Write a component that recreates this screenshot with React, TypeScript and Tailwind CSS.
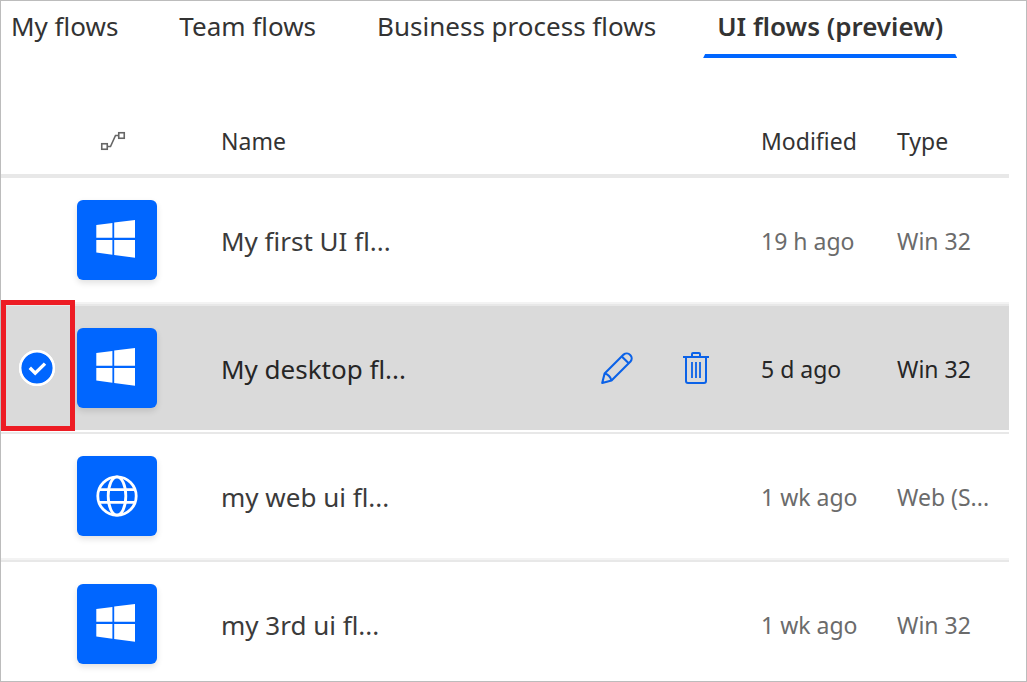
import { useState } from "react";
import { clsx } from "clsx";

type Kind = "windows" | "web";

interface Flow {
  id: number;
  name: string;
  modified: string;
  type: string;
  kind: Kind;
}

const tabs = ["My flows", "Team flows", "Business process flows", "UI flows (preview)"];

const flows: Flow[] = [
  { id: 1, name: "My first UI fl...", modified: "19 h ago", type: "Win 32", kind: "windows" },
  { id: 2, name: "My desktop fl...", modified: "5 d ago", type: "Win 32", kind: "windows" },
  { id: 3, name: "my web ui fl...", modified: "1 wk ago", type: "Web (S...", kind: "web" },
  { id: 4, name: "my 3rd ui fl...", modified: "1 wk ago", type: "Win 32", kind: "windows" },
];

function FlowTile({ kind }: { kind: Kind }) {
  return (
    <div className="size-20 rounded-md bg-[#0066ff] shadow-[0_3px_6px_rgba(0,0,0,0.12)]">
      <svg viewBox="0 0 80 80" className="size-20" aria-hidden="true">
        {kind === "windows" ? (
          <path
            fill="#fff"
            d="M19.3 25.1 35.4 22.9V37.7H19.3ZM37.2 22.6 58 19.9V37.7H37.2ZM19.3 40H35.4V54.7L19.3 52.4ZM37.2 40H58V57.8L37.2 54.9Z"
          />
        ) : (
          <g fill="none" stroke="#fff" strokeWidth="2.8">
            <circle cx="40" cy="40" r="19.2" />
            <ellipse cx="40" cy="40" rx="8.8" ry="19.2" />
            <path d="M22 33.6H58M22 46.4H58" />
          </g>
        )}
      </svg>
    </div>
  );
}

function ConnectorIcon() {
  return (
    <svg viewBox="0 0 26 20" className="h-5 w-[26px]" fill="none" stroke="#666" strokeWidth="1.6" role="img" aria-label="Flow kind">
      <rect x="1.75" y="12.75" width="5.5" height="5.5" />
      <rect x="18.75" y="1.75" width="5.5" height="5.5" />
      <path d="M7.5 15.5H10.5L15.5 4.5H18.5" />
    </svg>
  );
}

function PencilIcon() {
  return (
    <svg viewBox="0 0 32 32" className="size-8" fill="none" stroke="#0b62e8" strokeWidth="2.1" strokeLinejoin="round" aria-hidden="true">
      <path d="M1.2 30.9 3.6 21.6 22.6 2.6A4.9 4.9 0 0 1 29.5 9.5L10.5 28.5Z" />
      <path d="M20.8 4.4 27.7 11.3M3.6 21.6Q9 23 10.5 28.5" />
    </svg>
  );
}

function TrashIcon() {
  return (
    <svg viewBox="0 0 26 32" className="h-8 w-[26px]" fill="none" stroke="#0b62e8" strokeWidth="2" aria-hidden="true">
      <path d="M0 5H26M9 5V2Q9 1 10 1H16Q17 1 17 2V5M3 5V29Q3 31 5 31H21Q23 31 23 29V5" />
      <path d="M9 10V26M13 10V26M17 10V26" strokeWidth="1.8" />
    </svg>
  );
}

export default function App() {
  const [activeTab, setActiveTab] = useState(3);
  const [selected, setSelected] = useState(2);

  return (
    <main className="min-h-screen overflow-x-hidden border border-[#bcbcbc] bg-white font-['Noto_Sans','Open_Sans',sans-serif] text-[#333]">
      <nav className="-ml-1 flex gap-[33px]" aria-label="Flow categories">
        {tabs.map((tab, i) => (
          <button
            key={tab}
            type="button"
            onClick={() => setActiveTab(i)}
            className={clsx(
              "relative h-[57px] px-3.5 pb-2 text-[26px] leading-[48px] whitespace-nowrap",
              i === activeTab && "font-semibold",
            )}
          >
            {tab}
            {i === activeTab && (
              <span className="absolute inset-x-0 bottom-0 h-1 bg-[#0066ff] [clip-path:polygon(2px_0,calc(100%-2px)_0,100%_100%,0_100%)]" />
            )}
          </button>
        ))}
      </nav>

      <div className="mt-[52px] pr-[17px]">
        <table className="w-full table-fixed border-separate border-spacing-0 text-left">
          <colgroup>
            <col className="w-[76px]" />
            <col className="w-[144px]" />
            <col />
            <col className="w-[184px]" />
            <col className="w-[136px]" />
            <col className="w-[112px]" />
          </colgroup>
          <thead>
            <tr className="h-[68px] text-[23px] leading-8 *:border-b-4 *:border-[#e8e8e8] *:pt-0 *:pb-0.5 *:font-normal">
              <th />
              <th scope="col" className="pl-[23px]">
                <ConnectorIcon />
              </th>
              <th scope="col">Name</th>
              <th />
              <th scope="col">Modified</th>
              <th scope="col">Type</th>
            </tr>
          </thead>
          <tbody>
            {flows.map((flow) => {
              const on = flow.id === selected;
              return (
                <tr
                  key={flow.id}
                  className={clsx(
                    "group *:border-b-2 *:border-[#e8e8e8] *:pb-6 last:*:border-b-0 last:*:pb-[17px] last:*:shadow-none",
                    on
                      ? "bg-[#dadada] text-[#262626] *:shadow-[inset_0_-2px_0_#fff]"
                      : "text-[#6b6b6b] *:shadow-[inset_0_-2px_0_#f3f3f3]",
                  )}
                >
                  <td className="relative pt-[22px]">
                    <label className="relative ml-[18px] block size-9">
                      <input
                        type="checkbox"
                        checked={on}
                        onChange={() => setSelected(on ? 0 : flow.id)}
                        aria-label={`Select ${flow.name}`}
                        className="block size-9 appearance-none rounded-full border-2 border-white bg-[#0066ff] opacity-0 group-hover:opacity-50 checked:opacity-100"
                      />
                      {on && (
                        <svg viewBox="0 0 36 36" className="pointer-events-none absolute inset-0 size-9" fill="none" stroke="#fff" aria-hidden="true">
                          <circle cx="18" cy="18" r="16.8" strokeWidth="2.4" />
                          <path d="M10.8 17.8 16.2 23.2 26 13.6" strokeWidth="3.4" />
                        </svg>
                      )}
                    </label>
                    {on && (
                      <span className="pointer-events-none absolute -top-1.5 bottom-px left-0 w-[74px] border-5 border-[#ed1c24]" />
                    )}
                  </td>
                  <td className="pt-[22px]">
                    <FlowTile kind={flow.kind} />
                  </td>
                  <td className={clsx("truncate pt-6 text-[26px] leading-9", on ? "text-[#262626]" : "text-[#3b3b3b]")}>
                    {flow.name}
                  </td>
                  <td className="pt-[22px]">
                    {on && (
                      <div className="flex items-center gap-[50px] pl-6">
                        <button type="button" aria-label={`Edit ${flow.name}`}>
                          <PencilIcon />
                        </button>
                        <button type="button" aria-label={`Delete ${flow.name}`}>
                          <TrashIcon />
                        </button>
                      </div>
                    )}
                  </td>
                  <td className="pt-6 text-[23px] leading-8 whitespace-nowrap">{flow.modified}</td>
                  <td className="pt-6 text-[23px] leading-8 whitespace-nowrap">{flow.type}</td>
                </tr>
              );
            })}
          </tbody>
        </table>
      </div>
    </main>
  );
}
